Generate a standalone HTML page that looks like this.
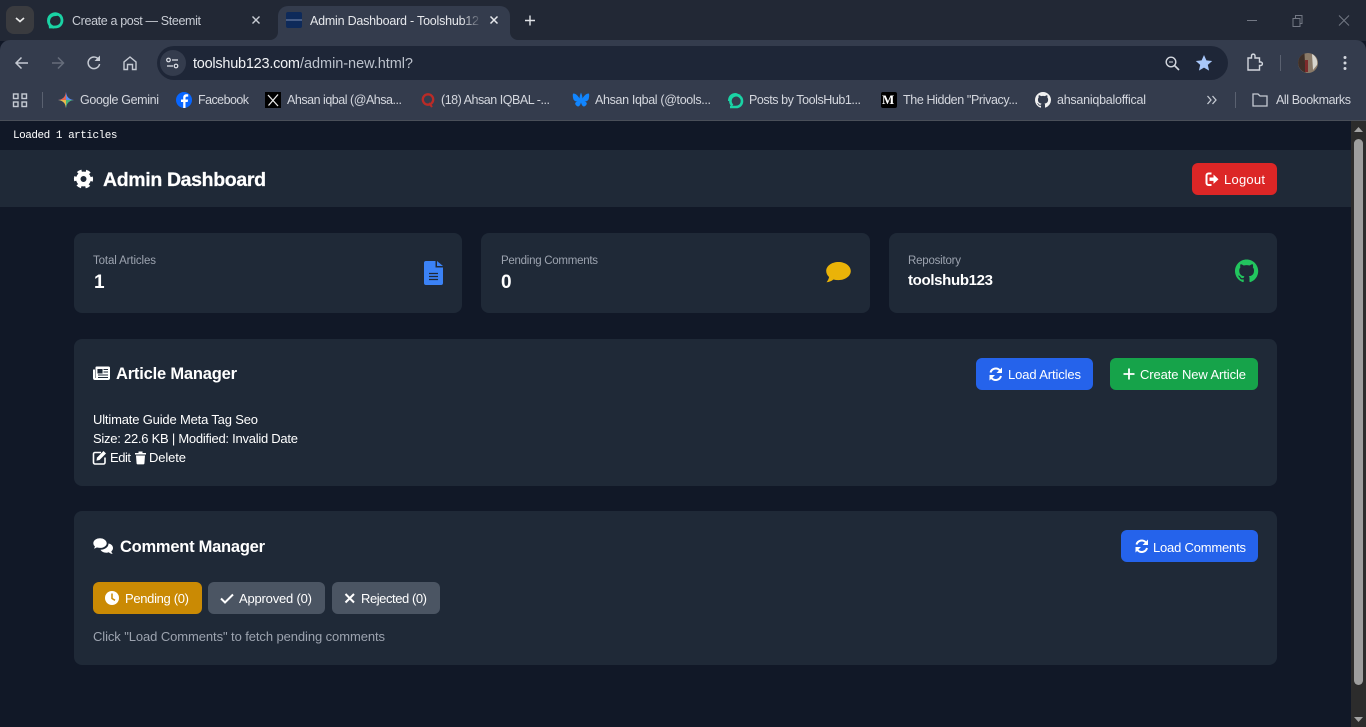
<!DOCTYPE html>
<html lang="en"><head><meta charset="utf-8"><title>Admin Dashboard - Toolshub123</title>
<style>
html,body{margin:0;padding:0;width:1366px;height:727px;overflow:hidden;background:#111827}
body{position:relative;font-family:"Liberation Sans",sans-serif}
.b{position:absolute}
svg{position:absolute;left:0;top:0}
text{font-family:"Liberation Sans",sans-serif;white-space:pre}
.tab{font-size:12.5px;fill:#c8ccd4}
.tabA{font-size:12.5px;fill:#e6e8ec}
.bm{font-size:12.5px;fill:#d4d7de}
.url{font-size:14.5px}
.mono{font-family:"Liberation Mono",monospace;font-size:11px;fill:#fff}
.lab{font-size:11.500px;fill:#9ca3af}
.val{font-size:19px;font-weight:bold;fill:#fff}
.h2{font-size:16.500px;font-weight:bold;fill:#fff}
.btn{font-size:13px;fill:#fff}
.body{font-size:13px;fill:#fff}
.mute{font-size:13px;fill:#9ca3af}
</style></head><body>
<div class="b" style="left:0;top:0;width:1366px;height:41px;background:#222835"></div>
<div class="b" style="left:0;top:40px;width:1366px;height:80px;background:#343c4d;border-radius:10px 10px 0 0"></div>
<div class="b" style="left:0;top:120px;width:1366px;height:1px;background:#4a4f59"></div>
<div class="b" style="left:6px;top:6px;width:28px;height:28px;background:#3a3b3f;border-radius:8px"></div>
<div class="b" style="left:278px;top:6px;width:232px;height:35px;background:#343c4d;border-radius:10px 10px 0 0"></div>
<div class="b" style="left:157px;top:46px;width:1071px;height:34px;background:#1e2637;border-radius:17px"></div>
<div class="b" style="left:160px;top:50px;width:26px;height:26px;background:#343c4d;border-radius:13px"></div>

<div class="b" style="left:0;top:150px;width:1351px;height:57px;background:#1f2937"></div>
<div class="b" style="left:74px;top:233px;width:388px;height:80px;background:#1f2937;border-radius:8px"></div>
<div class="b" style="left:481px;top:233px;width:389px;height:80px;background:#1f2937;border-radius:8px"></div>
<div class="b" style="left:889px;top:233px;width:388px;height:80px;background:#1f2937;border-radius:8px"></div>
<div class="b" style="left:74px;top:339px;width:1203px;height:147px;background:#1f2937;border-radius:8px"></div>
<div class="b" style="left:74px;top:511px;width:1203px;height:154px;background:#1f2937;border-radius:8px"></div>
<div class="b" style="left:1192px;top:163px;width:85px;height:32px;background:#dc2626;border-radius:6px"></div>
<div class="b" style="left:976px;top:358px;width:117px;height:32px;background:#2563eb;border-radius:6px"></div>
<div class="b" style="left:1110px;top:358px;width:148px;height:32px;background:#16a34a;border-radius:6px"></div>
<div class="b" style="left:1121px;top:530px;width:137px;height:32px;background:#2563eb;border-radius:6px"></div>
<div class="b" style="left:93px;top:582px;width:109px;height:32px;background:#ca8a04;border-radius:6px"></div>
<div class="b" style="left:208px;top:582px;width:117px;height:32px;background:#4b5563;border-radius:6px"></div>
<div class="b" style="left:332px;top:582px;width:108px;height:32px;background:#4b5563;border-radius:6px"></div>
<div class="b" style="left:1351px;top:121px;width:15px;height:606px;background:#2c2c2c"></div>
<div class="b" style="left:1354px;top:139px;width:9px;height:546px;background:#9e9e9e;border-radius:5px"></div>

<svg width="1366" height="727" viewBox="0 0 1366 727">
<defs><linearGradient id="fade"><stop offset="0" stop-color="#343c4d" stop-opacity="0"/><stop offset="1" stop-color="#343c4d"/></linearGradient></defs>
<!-- tab strip -->
<path d="M16 18l4 3.500 4-3.500" fill="none" stroke="#e8e8e8" stroke-width="1.700"/>
<path d="M52 26.500a6.800 6.800 0 1 1 10-6.500c0 4.500-3 7-7 7h-6c2-.5 3-1 3-.5z" fill="none" stroke="#1ad3a5" stroke-width="2.800"/><path d="M48 21c0-5 4-8 9-8l5 2-6 1c-4 0-6 2-6 6z" fill="#1ad3a5"/>
<text class="tab" x="72" y="25" textLength="129">Create a post — Steemit</text>
<path d="M252.500 16.500l7 7M259.500 16.500l-7 7" stroke="#c8ccd4" stroke-width="1.400"/>
<path d="M270 40a8 8 0 0 0 8-8v8z" fill="#343c4d"/><path d="M518 40a8 8 0 0 1-8-8v8z" fill="#343c4d"/>
<rect x="286" y="12" width="16" height="16" rx="2" fill="#0e2a5a"/><rect x="286" y="19.500" width="16" height="1" fill="#7d8fb0"/>
<text class="tabA" x="310" y="25" textLength="169">Admin Dashboard - Toolshub12</text>
<rect x="462" y="10" width="20" height="22" fill="url(#fade)"/>
<path d="M490.500 16.500l7 7M497.500 16.500l-7 7" stroke="#e6e8ec" stroke-width="1.500"/>
<path d="M525 20.500h10M530 15.500v10" stroke="#dfe1e6" stroke-width="1.400"/>
<path d="M1247 20.500h10" stroke="#737884" stroke-width="1"/>
<path d="M1293 18.500h7v8h-7zM1295.500 18.500v-3h6.500v8h-2" fill="none" stroke="#737884" stroke-width="1"/>
<path d="M1339 15.500l10 10M1349 15.500l-10 10" stroke="#737884" stroke-width="1"/>
<!-- toolbar -->
<path d="M28 63H16.500M21.500 57.500l-5.500 5.500 5.500 5.500" fill="none" stroke="#c5cad3" stroke-width="1.500"/>
<path d="M52 63h11.500M58 57.500l5.500 5.500-5.500 5.500" fill="none" stroke="#666d7b" stroke-width="1.500"/>
<path d="M99 60a5.800 5.800 0 1 0 .6 4" fill="none" stroke="#c5cad3" stroke-width="1.500"/><path d="M100 55.500v5.500h-5.500z" fill="#c5cad3"/>
<path d="M124 69.500v-7.500l6-5 6 5v7.500h-3.500v-5h-5v5z" fill="none" stroke="#c5cad3" stroke-width="1.400"/>
<circle cx="168.500" cy="60" r="1.800" fill="none" stroke="#dfe2e8" stroke-width="1.200"/><path d="M172 60h6M167 66h6" stroke="#dfe2e8" stroke-width="1.300"/><circle cx="176" cy="66" r="1.800" fill="none" stroke="#dfe2e8" stroke-width="1.200"/>
<text class="url" x="193" y="68" textLength="107" fill="#f0f2f5">toolshub123.com</text>
<text class="url" x="300" y="68" textLength="113" fill="#bcc2cc">/admin-new.html?</text>
<circle cx="1171" cy="62" r="4.800" fill="none" stroke="#d3d7de" stroke-width="1.400"/><path d="M1174.500 65.500l4.500 4.500" stroke="#d3d7de" stroke-width="1.600"/><path d="M1169 62h4" stroke="#d3d7de" stroke-width="1"/>
<path d="M1204 55l2.400 5.400 5.800.6-4.400 3.900 1.300 5.700-5.100-3-5.100 3 1.300-5.700-4.400-3.900 5.800-.6z" fill="#a8c7fa"/>
<path d="M1248 58h3.500v-2.500a1.800 1.800 0 0 1 3.500 0v2.500h4.500v4h1.500a1.800 1.800 0 0 1 0 3.500h-1.500v4.500h-11.500z" fill="none" stroke="#d3d7de" stroke-width="1.400"/>
<rect x="1280" y="55" width="1" height="16" fill="#5a6170"/>
<circle cx="1308" cy="63" r="10" fill="#8a7a68"/><path d="M1298.500 60a10 10 0 0 1 6-6.500l1 19a10 10 0 0 1-7-12.500z" fill="#3e2f28"/><path d="M1312 54a10 10 0 0 1 5 11l-4 5z" fill="#d8d6cf"/><rect x="1305" y="60" width="3" height="12" fill="#7d2a2a"/>
<circle cx="1345" cy="57.500" r="1.500" fill="#d3d7de"/><circle cx="1345" cy="63" r="1.500" fill="#d3d7de"/><circle cx="1345" cy="68.500" r="1.500" fill="#d3d7de"/>
<!-- bookmarks bar -->
<g fill="none" stroke="#c5cad3" stroke-width="1.400"><rect x="13.500" y="94" width="4.500" height="4.500"/><rect x="22" y="94" width="4.500" height="4.500"/><rect x="13.500" y="102" width="4.500" height="4.500"/><rect x="22" y="102" width="4.500" height="4.500"/></g>
<rect x="42" y="92" width="1" height="16" fill="#5a6170"/>
<path d="M66 92c.6 5 3 7.400 8 8-5 .6-7.400 3-8 8-.6-5-3-7.400-8-8 5-.6 7.400-3 8-8z" fill="#5b8def"/><path d="M66 92c-.6 5-3 7.400-8 8h8z" fill="#e5654f"/><path d="M58 100c5 .6 7.400 3 8 8v-8z" fill="#e9b949"/><path d="M66 100v8c.6-5 3-7.400 8-8z" fill="#49b37a"/>
<text class="bm" x="80" y="104" textLength="79">Google Gemini</text>
<circle cx="184" cy="100" r="8" fill="#0866ff"/><path d="M185.500 108v-6h2.200l.4-2.500h-2.600v-1.500c0-.8.400-1.400 1.500-1.400h1.200v-2.200c-2.800-.5-5 .2-5 3.200v1.900h-2.200v2.500h2.200v6z" fill="#fff"/>
<text class="bm" x="198" y="104" textLength="51">Facebook</text>
<rect x="265" y="92" width="16" height="16" fill="#000"/><path d="M268 95l10 11M278 94.500l-9.500 11" stroke="#e8e8e8" stroke-width="1.300"/>
<text class="bm" x="287" y="104" textLength="115">Ahsan iqbal (@Ahsa...</text>
<circle cx="428" cy="99.500" r="5.200" fill="none" stroke="#b92b27" stroke-width="2.300"/><path d="M429 103l3 4" stroke="#b92b27" stroke-width="2"/>
<text class="bm" x="441" y="104" textLength="109">(18) Ahsan IQBAL -...</text>
<path d="M581 92c-.8 2-1.500 4-1.500 6-1.500-3-4-5-6-5-1 0-.8 3-.3 5 .5 2 2 3 4.300 3-2.300.5-3 2-1.500 3.800 2 2.200 4 1.200 5-2.800 1 4 3 5 5 2.800 1.500-1.800.8-3.300-1.500-3.800 2.300 0 3.800-1 4.300-3 .5-2 .7-5-.3-5-2 0-4.500 2-6 5 0-2-.7-4-1.500-6z" fill="#1185fe" transform="translate(0 .5)"/>
<text class="bm" x="595" y="104" textLength="116">Ahsan Iqbal (@tools...</text>
<path d="M730 107h6c3.500 0 6-2.500 6-6a5.800 5.800 0 1 0-9.500 4.500" fill="none" stroke="#1ad3a5" stroke-width="2.600"/><path d="M728 101c0-5 3-8 8-8l5 2-6 1c-3 0-4.500 2-5 5z" fill="#1ad3a5"/>
<text class="bm" x="749" y="104" textLength="112">Posts by ToolsHub1...</text>
<rect x="881" y="92" width="16" height="16" rx="2" fill="#000"/><text x="882" y="104" style="font-family:'Liberation Serif',serif;font-size:13px;font-weight:bold;fill:#fff" textLength="14">M</text>
<text class="bm" x="903" y="104" textLength="115">The Hidden "Privacy...</text>
<path transform="translate(1035 92)" fill="#f0f0f0" d="M8 0C3.580 0 0 3.580 0 8c0 3.540 2.290 6.530 5.470 7.590.4.070.55-.17.55-.38 0-.19-.01-.82-.01-1.490-2.010.37-2.530-.49-2.690-.94-.09-.23-.48-.94-.82-1.130-.28-.15-.68-.52-.01-.53.630-.01 1.080.58 1.230.82.720 1.210 1.870.87 2.330.66.070-.52.280-.87.510-1.070-1.780-.2-3.640-.89-3.640-3.950 0-.87.310-1.590.820-2.150-.08-.2-.36-1.020.08-2.120 0 0 .67-.21 2.200.82.640-.18 1.320-.27 2-.27.680 0 1.360.09 2 .27 1.530-1.040 2.200-.82 2.200-.82.440 1.100.160 1.920.080 2.120.510.56.820 1.270.820 2.150 0 3.070-1.870 3.750-3.650 3.950.29.25.54.73.54 1.480 0 1.070-.01 1.930-.01 2.200 0 .21.15.46.55.38A8.013 8.013 0 0016 8c0-4.420-3.580-8-8-8z"/>
<text class="bm" x="1057" y="104" textLength="89">ahsaniqbaloffical</text>
<path d="M1207.500 96l3.500 4-3.500 4M1212.500 96l3.500 4-3.500 4" fill="none" stroke="#c5cad3" stroke-width="1.300"/>
<rect x="1235" y="92" width="1" height="16" fill="#5a6170"/>
<path d="M1253 94h5l2 2h7v10h-14z" fill="none" stroke="#c5cad3" stroke-width="1.300"/>
<text class="bm" x="1276" y="104" textLength="75">All Bookmarks</text>
<!-- scroll arrows -->
<path d="M1358.500 127l4.500 5h-9z" fill="#a3a3a3"/><path d="M1358.500 722l4.500-5h-9z" fill="#a3a3a3"/>
<!-- page -->
<text class="mono" x="13" y="138" textLength="104.500">Loaded 1 articles</text>
<g fill="none" stroke="#fff"><circle cx="83.500" cy="179" r="5.200" stroke-width="4.400"/><circle cx="83.500" cy="179" r="8" stroke-width="3.200" stroke-dasharray="4.300 4.078" transform="rotate(-15 83.500 179)"/></g>
<text x="103" y="186" textLength="163" stroke="#fff" stroke-width=".25" style="font-size:19.500px;font-weight:bold;fill:#fff">Admin Dashboard</text>
<path d="M1211.500 173.500h-3a2 2 0 0 0-2 2v7.500a2 2 0 0 0 2 2h3" fill="none" stroke="#fff" stroke-width="2"/><path d="M1218.500 179.200l-5-4.700v3h-4v3.400h4v3z" fill="#fff"/>
<text class="btn" x="1224" y="184" textLength="41">Logout</text>
<text class="lab" x="93" y="264" textLength="63">Total Articles</text>
<text class="val" x="94" y="288" textLength="9">1</text>
<path d="M426 261h9.500v6.500h7.500v15.500a2 2 0 0 1-2 2h-15a2 2 0 0 1-2-2v-20a2 2 0 0 1 2-2z" fill="#3b82f6" transform="translate(0 0)"/><path d="M437 261l6 5h-6z" fill="#3b82f6"/><path d="M429 273.500h9M429 276.500h9M429 279.500h9" stroke="#1f2937" stroke-width="1.200"/>
<text class="lab" x="501" y="264" textLength="97">Pending Comments</text>
<text class="val" x="501" y="288" textLength="11">0</text>
<path d="M838.500 262.500c-6.800 0-12.300 3.900-12.300 9 0 2.300 1.100 4.400 2.900 6-.3 1.900-1.400 3.700-2.600 5.300 2.600-.2 5-1.200 6.900-2.800 1.600.4 3.300.6 5.100.6 6.800 0 12.300-4.100 12.300-9.100s-5.500-9-12.300-9z" fill="#eab308" transform="translate(0 -.5)"/>
<text class="lab" x="908" y="264" textLength="53">Repository</text>
<text x="908" y="285" textLength="85" style="font-size:15px;font-weight:bold;fill:#fff">toolshub123</text>
<path transform="translate(1235 259.500) scale(1.450)" fill="#22c55e" d="M8 0C3.580 0 0 3.580 0 8c0 3.540 2.290 6.530 5.470 7.590.4.070.55-.17.55-.38 0-.19-.01-.82-.01-1.490-2.010.37-2.530-.49-2.690-.94-.09-.23-.48-.94-.82-1.130-.28-.15-.68-.52-.01-.53.630-.01 1.080.58 1.230.82.720 1.210 1.870.87 2.330.66.070-.52.280-.87.510-1.070-1.780-.2-3.640-.89-3.640-3.950 0-.87.310-1.590.820-2.150-.08-.2-.36-1.020.08-2.120 0 0 .67-.21 2.200.82.640-.18 1.320-.27 2-.27.680 0 1.360.09 2 .27 1.530-1.040 2.200-.82 2.200-.82.440 1.100.160 1.920.080 2.120.510.56.820 1.270.820 2.150 0 3.070-1.870 3.750-3.650 3.950.29.25.54.730.54 1.480 0 1.070-.01 1.930-.01 2.200 0 .21.15.46.55.38A8.013 8.013 0 0016 8c0-4.420-3.580-8-8-8z"/>
<!-- article manager -->
<path d="M96.500 366.500h12a1.500 1.500 0 0 1 1.500 1.500v10a2 2 0 0 1-2 2H95a2 2 0 0 1-2-2v-8.500h2v8.500h.5V367.500a1 1 0 0 1 1-1z" fill="#fff"/><path d="M98 369.500h4v3.500h-4zM103.500 369.500h4.500M103.500 372h4.500M98 375h10M98 377.500h10" stroke="#1f2937" stroke-width="1.100" fill="#1f2937"/>
<text class="h2" x="116" y="379" textLength="121">Article Manager</text>
<g fill="none" stroke="#fff" stroke-width="2"><path d="M990.500 372.500a5.500 5.500 0 0 1 9.500-2"/><path d="M1001 376a5.500 5.500 0 0 1-9.500 2"/></g><path d="M1002 367.500v5.500h-5.500zM989.500 380.500v-5.500h5.500z" fill="#fff"/>
<text class="btn" x="1008" y="379" textLength="73">Load Articles</text>
<path d="M1123.500 374h11M1129 368.500v11" stroke="#fff" stroke-width="1.800"/>
<text class="btn" x="1140" y="379" textLength="106">Create New Article</text>
<text class="body" x="93" y="424" textLength="165">Ultimate Guide Meta Tag Seo</text>
<text class="body" x="93" y="443" textLength="205">Size: 22.6 KB | Modified: Invalid Date</text>
<path d="M101 452.500h-6a1.500 1.500 0 0 0-1.500 1.500v8.500a1.500 1.500 0 0 0 1.500 1.500h8.500a1.500 1.500 0 0 0 1.500-1.500v-5" fill="none" stroke="#fff" stroke-width="1.600"/><path d="M103.500 451l2.500 2.500-6.500 6.500-3 .6.500-3z" fill="#fff"/>
<text class="body" x="110" y="462" textLength="21">Edit</text>
<path d="M135 453h11v1.500h-11zM138.500 451.500h4v1.500h-4zM136 455.500h9l-.6 8a1 1 0 0 1-1 .9h-5.800a1 1 0 0 1-1-.9z" fill="#fff"/>
<text class="body" x="149" y="462" textLength="37">Delete</text>
<!-- comment manager -->
<path d="M100 538c-4 0-7 2.300-7 5.300 0 1.300.6 2.400 1.600 3.300-.2 1-.8 1.800-1.500 2.500 1.500 0 2.700-.5 3.800-1.300.9.200 2 .4 3.100.4 4 0 7-2.300 7-5s-3-5.200-7-5.200z" fill="#fff" stroke="#1f2937" stroke-width=".6"/><path d="M108.500 543.500c.1 3.500-3.500 6.200-8 6.300 1 1.800 3.200 2.900 5.800 2.900.9 0 1.700-.1 2.500-.4.900.8 2.200 1.500 3.900 1.700-.6-.7-1.200-1.600-1.400-2.700 1.100-.8 1.700-2 1.700-3.300 0-2.400-2-4.100-4.500-4.500z" fill="#fff"/>
<text class="h2" x="120" y="552" textLength="145">Comment Manager</text>
<g fill="none" stroke="#fff" stroke-width="2"><path d="M1136.500 544.500a5.500 5.500 0 0 1 9.500-2"/><path d="M1147 548a5.500 5.500 0 0 1-9.500 2"/></g><path d="M1148 539.500v5.500h-5.500zM1135.500 552.500v-5.500h5.500z" fill="#fff"/>
<text class="btn" x="1153" y="552" textLength="93">Load Comments</text>
<circle cx="112" cy="598" r="7" fill="#fff"/><path d="M112 593.500v5l3 1.800" fill="none" stroke="#ca8a04" stroke-width="1.500"/>
<text class="btn" x="125" y="603" textLength="64">Pending (0)</text>
<path d="M221 598.500l4 4 8-8" fill="none" stroke="#fff" stroke-width="2"/>
<text class="btn" x="239" y="603" textLength="73">Approved (0)</text>
<path d="M345.500 594l8.500 8.500M354 594l-8.500 8.500" stroke="#fff" stroke-width="2"/>
<text class="btn" x="361" y="603" textLength="66">Rejected (0)</text>
<text class="mute" x="93" y="641" textLength="292">Click "Load Comments" to fetch pending comments</text>
</svg>
</body></html>
